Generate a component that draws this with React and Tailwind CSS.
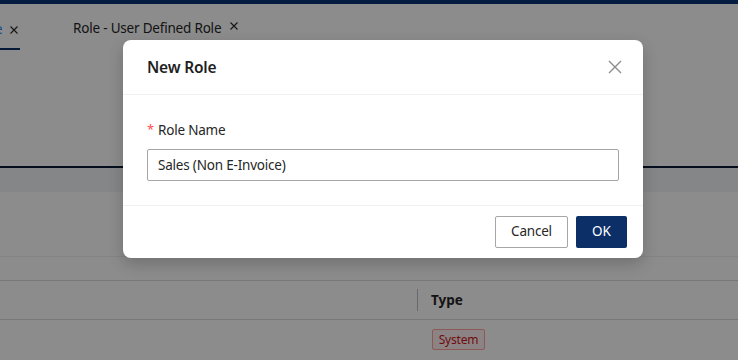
import React from 'react'

export default function App() {
  return (
    <div className="relative w-[738px] h-[360px] overflow-hidden bg-white text-[#262626]" style={{ fontFamily: '"Noto Sans", "Open Sans", sans-serif' }}>
      <Page />
      <div className="absolute inset-0 bg-black/45" />
      <RoleDialog />
    </div>
  )
}

function Cross({ size = 8, className = '' }) {
  return (
    <svg width={size} height={size} viewBox="0 0 8 8" className={className}>
      <path d="M0.5 0.5L7.5 7.5M7.5 0.5L0.5 7.5" stroke="currentColor" strokeWidth="1.1" fill="none" />
    </svg>
  )
}

function Page() {
  return (
    <div className="flex flex-col">
      <div className="h-[4px] bg-[#073373]" />
      <div className="h-[46px] flex items-end">
        <div className="relative w-[20px] h-[46px] border-b-2 border-[#0b2f66]">
          <span className="absolute left-[-5px] top-[19px] w-[7px] overflow-hidden text-[13.5px] leading-none text-[#1890ff]">e</span>
          <Cross className="absolute left-[10px] top-[22px] text-[#262626]" />
        </div>
        <div className="ml-[53px] h-[46px] flex items-center gap-[9px] pt-[2px]">
          <span className="text-[13.5px] tracking-[-0.2px]">Role - User Defined Role</span>
          <Cross className="text-[#262626] -mt-[4px]" />
        </div>
      </div>
      <div className="h-[118px] border-b-2 border-[#0a1a33]" />
      <div className="h-[24px] bg-[#f3f4f6]" />
      <div className="h-[65px] border-b border-[#f0f0f0]" />
      <div className="h-[24px] border-b border-[#d9d9d9]" />
      <div className="h-[39px] border-b border-[#d9d9d9] flex items-center">
        <div className="w-[418px] h-[22px] border-r border-[#bfbfbf]" />
        <span className="ml-[13px] text-[13.5px] font-bold">Type</span>
      </div>
      <div className="h-[38px] flex items-start pt-[9px] pl-[432px]">
        <span className="w-[53px] h-[21px] flex items-center justify-center border border-[#ffa39e] bg-[#fff1f0] text-[#cf1322] text-[12px] tracking-[-0.2px] rounded-[2px]">System</span>
      </div>
    </div>
  )
}

function RoleDialog() {
  return (
    <div className="absolute left-[123px] top-[40px] w-[520px] bg-white rounded-[8px] shadow-[0_6px_16px_rgba(0,0,0,0.2)] flex flex-col">
      <div className="h-[55px] px-[24px] flex items-center justify-between border-b border-[#f0f0f0]">
        <span className="text-[15.5px] font-semibold text-[#1f1f1f] tracking-[-0.2px] mt-[1px]">New Role</span>
        <svg width="14" height="14" viewBox="0 0 14 14" className="text-[#8c8c8c] mr-[-3px]">
          <path d="M1 1L13 13M13 1L1 13" stroke="currentColor" strokeWidth="1.4" fill="none" />
        </svg>
      </div>
      <div className="px-[24px] pt-[24px] pb-[24px] flex flex-col">
        <div className="flex items-center h-[22px] text-[13.5px] tracking-[-0.2px]">
          <span className="text-[#ff4d4f] mr-[4px] text-[13px]">*</span>
          <span>Role Name</span>
        </div>
        <div className="mt-[8px] w-[472px] h-[32px] border border-[#a6a6a6] rounded-[2px] flex items-center px-[10px] text-[13.5px] tracking-[-0.2px]">
          Sales (Non E-Invoice)
        </div>
      </div>
      <div className="h-[53px] border-t border-[#f0f0f0] flex items-center justify-end gap-[8px] pr-[16px] pb-[1px]">
        <button className="w-[73px] h-[32px] border border-[#a6a6a6] rounded-[2px] text-[13.5px] tracking-[-0.2px] bg-white">Cancel</button>
        <button className="w-[51px] h-[32px] rounded-[2px] text-[13.5px] bg-[#0b2f66] text-white">OK</button>
      </div>
    </div>
  )
}
